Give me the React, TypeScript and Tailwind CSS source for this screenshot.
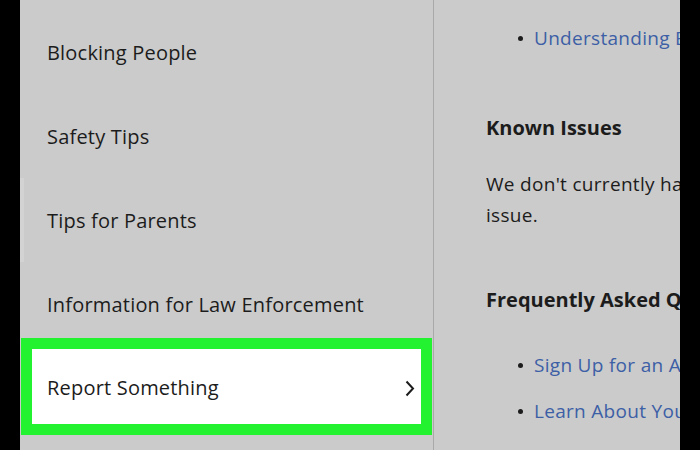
import React from 'react';

const navItems = ['Blocking People', 'Safety Tips', 'Tips for Parents', 'Information for Law Enforcement'];

export default function App() {
  return (
    <div
      className="w-[700px] h-[450px] flex overflow-hidden bg-black text-[#1c1c1c]"
      style={{ fontFamily: '"Open Sans", "Liberation Sans", sans-serif' }}
    >
      {/* left black edge */}
      <div className="w-[20px] shrink-0 bg-black" />

      {/* side menu */}
      <div className="relative w-[413px] shrink-0 bg-[#cbcbcb] pt-[11px]">
        {/* scrollbar thumb */}
        <div className="absolute left-0 top-[178px] w-[4px] h-[84px] bg-[#d3d3d3]" />

        {navItems.map((item) => (
          <div key={item} className="h-[84px] flex items-center pl-[27px] text-[20px] tracking-[0.2px]">
            {item}
          </div>
        ))}

        {/* highlighted row */}
        <div className="mt-[-9px] ml-[1px] w-[411px] h-[97px] border-[11px] border-[#22f22f] bg-white flex items-center justify-between pl-[15px] pr-[6px] pt-[3px]">
          <span className="text-[20px] tracking-[0.2px]">Report Something</span>
          <svg width="10" height="17" viewBox="0 0 10 17" fill="none">
            <polyline points="1.5,1.5 8,8.5 1.5,15.5" stroke="#1c1c1c" strokeWidth="2" />
          </svg>
        </div>
      </div>

      {/* divider */}
      <div className="w-[1px] shrink-0 bg-[#a9a9a9]" />

      {/* article content */}
      <div className="w-[246px] shrink-0 overflow-hidden bg-[#cbcbcb]">
        <div className="w-[420px] pl-[52px] pt-[23px] text-[19px]">
          <ul className="leading-[30px]">
            <li className="flex items-center whitespace-nowrap">
              <span className="w-[5px] h-[5px] rounded-full bg-[#1c1c1c] ml-[32px] mr-[11px]" />
              <span className="text-[#3d5fa6] tracking-[0.3px]">Understanding Blocking</span>
            </li>
          </ul>

          <h3 className="mt-[60px] leading-[30px] text-[20px] font-bold whitespace-nowrap">Known Issues</h3>
          <p className="mt-[26px] leading-[31px] whitespace-nowrap tracking-[0.3px]">
            We don't currently have any known issues with this
            <br />
            issue.
          </p>

          <h3 className="mt-[54px] leading-[30px] text-[20px] font-bold whitespace-nowrap">Frequently Asked Questions</h3>
          <ul className="mt-[35px] leading-[30px] tracking-[0.3px]">
            <li className="flex items-center whitespace-nowrap">
              <span className="w-[5px] h-[5px] rounded-full bg-[#1c1c1c] ml-[32px] mr-[11px]" />
              <span className="text-[#3d5fa6]">Sign Up for an Account</span>
            </li>
            <li className="mt-[16px] flex items-center whitespace-nowrap">
              <span className="w-[5px] h-[5px] rounded-full bg-[#1c1c1c] ml-[32px] mr-[11px]" />
              <span className="text-[#3d5fa6]">Learn About Your Account</span>
            </li>
          </ul>
        </div>
      </div>

      {/* right black edge */}
      <div className="flex-1 bg-black" />
    </div>
  );
}
